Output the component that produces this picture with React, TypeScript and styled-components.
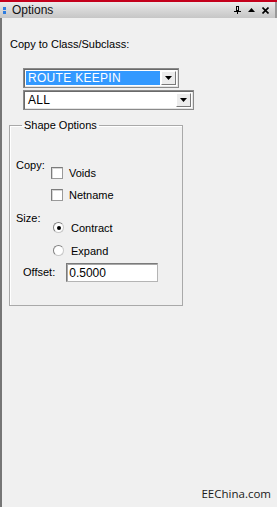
import React from "react";
import styled, { createGlobalStyle } from "styled-components";

const Global = createGlobalStyle`
  html, body {
    margin: 0;
    padding: 0;
    background: #f0f0f0;
  }
  * {
    box-sizing: border-box;
  }
`;

const Window = styled.div`
  width: 277px;
  height: 507px;
  display: flex;
  flex-direction: column;
  background: #f0f0f0;
  font-family: "Liberation Sans", Arial, sans-serif;
  font-size: 11px;
  color: #000;
  border-top: 2px solid #c4001c;
`;

const TitleBar = styled.div`
  height: 16px;
  display: flex;
  align-items: center;
  padding: 0 6px 0 3px;
  background: linear-gradient(#ececec, #d4d4d4 60%, #c6c6c6);
  border-right: 2px solid #9a9a9a;
`;

const Grip = styled.div`
  width: 3px;
  display: flex;
  flex-direction: column;
  gap: 1px;
  margin-right: 6px;
  span {
    height: 3px;
    background: #2f7de0;
  }
`;

const Title = styled.div`
  flex: 1;
  font-size: 12px;
  color: #111;
`;

const TitleButtons = styled.div`
  display: flex;
  align-items: center;
  gap: 7px;
  svg {
    display: block;
  }
`;

const Body = styled.div`
  flex: 1;
  display: flex;
  flex-direction: column;
  border-left: 2px solid #767676;
  padding: 0 0 6px 7px;
`;

const Label = styled.div`
  line-height: 13px;
  white-space: nowrap;
`;

const Heading = styled(Label)`
  margin: 20px 0 0 1px;
`;

const Combo = styled.div<{ $w: number; $top: number }>`
  width: ${(p) => p.$w}px;
  height: 20px;
  margin: ${(p) => p.$top}px 0 0 14px;
  display: flex;
  background: #fff;
  border: 1px solid #8a8a8a;
  box-shadow: inset 1px 1px 0 #6a6a6a, inset -1px -1px 0 #e4e4e4;
  padding: 2px 2px 2px 2px;
`;

const ComboText = styled.div<{ $sel?: boolean }>`
  flex: 1;
  display: flex;
  align-items: center;
  padding-left: 2px;
  font-size: 12px;
  letter-spacing: 0.3px;
  background: ${(p) => (p.$sel ? "#3399ff" : "#fff")};
  color: ${(p) => (p.$sel ? "#fff" : "#000")};
`;

const DropButton = styled.div`
  width: 15px;
  margin-left: 1px;
  display: flex;
  align-items: center;
  justify-content: center;
  background: #ececec;
  border-top: 1px solid #fff;
  border-left: 1px solid #fff;
  border-right: 1px solid #7a7a7a;
  border-bottom: 1px solid #7a7a7a;
`;

const Group = styled.fieldset`
  width: 174px;
  height: 187px;
  margin: 9px 0 0 0;
  padding: 0 0 0 6px;
  border: 1px solid #a9a9a9;
  box-shadow: 1px 1px 0 #fff inset;
  display: flex;
  flex-direction: column;
  legend {
    padding: 0 2px;
    margin-left: 6px;
    line-height: 13px;
  }
`;

const Section = styled.div<{ $top: number }>`
  display: flex;
  margin-top: ${(p) => p.$top}px;
`;

const SectionLabel = styled(Label)`
  width: 35px;
`;

const Options = styled.div<{ $pad: number; $gap: number }>`
  display: flex;
  flex-direction: column;
  gap: ${(p) => p.$gap}px;
  padding-top: ${(p) => p.$pad}px;
`;

const Option = styled.div`
  display: flex;
  align-items: center;
  height: 13px;
  gap: 6px;
`;

const Box = styled.span`
  width: 12px;
  height: 12px;
  background: #fff;
  border: 1px solid #9a9a9a;
  border-top-color: #7c7c7c;
  border-left-color: #7c7c7c;
  box-shadow: inset 1px 1px 0 #d6d6d6;
`;

const Radio = styled.span<{ $on?: boolean }>`
  width: 11px;
  height: 11px;
  margin-left: 2px;
  margin-right: 1px;
  border-radius: 50%;
  background: #fff;
  border: 1px solid #c8c8c8;
  border-top-color: #808080;
  border-left-color: #808080;
  display: flex;
  align-items: center;
  justify-content: center;
  &::after {
    content: "";
    width: 4px;
    height: 4px;
    border-radius: 50%;
    background: ${(p) => (p.$on ? "#000" : "transparent")};
  }
`;

const OffsetRow = styled.div`
  display: flex;
  align-items: center;
  margin: 6px 0 0 7px;
  gap: 11px;
`;

const Input = styled.div`
  width: 92px;
  height: 19px;
  background: #fff;
  border: 1px solid #b4b4b4;
  border-top-color: #7a7a7a;
  border-left-color: #7a7a7a;
  box-shadow: inset 1px 1px 0 #a8a8a8;
  padding: 2px 0 0 2px;
  font-size: 12px;
`;

const Footer = styled.div`
  margin-top: auto;
  align-self: flex-end;
  padding-right: 6px;
  font-family: "Open Sans", "Liberation Sans", sans-serif;
  font-size: 11.5px;
  color: #1a1a1a;
`;

const Arrow = () => (
  <svg width="7" height="4" viewBox="0 0 7 4">
    <path d="M0 0h7L3.5 4z" fill="#000" />
  </svg>
);

export default function App() {
  return (
    <Window>
      <Global />
      <TitleBar>
        <Grip>
          <span />
          <span />
        </Grip>
        <Title>Options</Title>
        <TitleButtons>
          <svg width="7" height="8" viewBox="0 0 7 8">
            <path d="M2 0h3v5H2z M3 1h1v3H3z" fill="#000" fillRule="evenodd" />
            <path d="M0 5h7v1H0z M3 6h1v2H3z" fill="#000" />
          </svg>
          <svg width="7" height="4" viewBox="0 0 7 4">
            <path d="M0 4h7L3.5 0z" fill="#000" />
          </svg>
          <svg width="7" height="7" viewBox="0 0 7 7">
            <path d="M0.5 0.5l6 6M6.5 0.5l-6 6" stroke="#000" strokeWidth="1.6" />
          </svg>
        </TitleButtons>
      </TitleBar>
      <Body>
        <Heading>Copy to Class/Subclass:</Heading>
        <Combo $w={156} $top={17}>
          <ComboText $sel>ROUTE KEEPIN</ComboText>
          <DropButton>
            <Arrow />
          </DropButton>
        </Combo>
        <Combo $w={171} $top={2}>
          <ComboText>ALL</ComboText>
          <DropButton>
            <Arrow />
          </DropButton>
        </Combo>
        <Group>
          <legend>Shape Options</legend>
          <Section $top={27}>
            <SectionLabel>Copy:</SectionLabel>
            <Options $pad={7} $gap={9}>
              <Option>
                <Box />
                Voids
              </Option>
              <Option>
                <Box />
                Netname
              </Option>
            </Options>
          </Section>
          <Section $top={11}>
            <SectionLabel>Size:</SectionLabel>
            <Options $pad={9} $gap={10}>
              <Option>
                <Radio $on />
                Contract
              </Option>
              <Option>
                <Radio />
                Expand
              </Option>
            </Options>
          </Section>
          <OffsetRow>
            <Label>Offset:</Label>
            <Input>0.5000</Input>
          </OffsetRow>
        </Group>
        <Footer>EEChina.com</Footer>
      </Body>
    </Window>
  );
}
